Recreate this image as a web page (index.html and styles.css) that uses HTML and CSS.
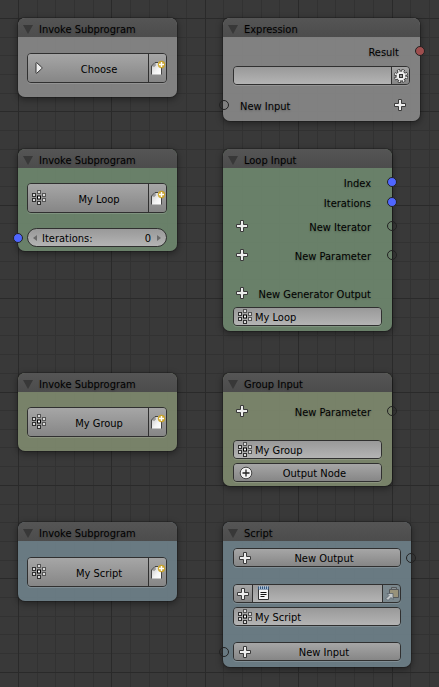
FILE: index.html
```html
<!DOCTYPE html>
<html lang="en">
<head>
<meta charset="utf-8">
<meta name="viewport" content="width=device-width, initial-scale=1">
<title>Node Editor</title>
<link rel="stylesheet" href="styles.css">
</head>
<body>
<svg class="defs" aria-hidden="true">
  <defs>
    <linearGradient id="paper" x1="0" y1="0" x2="1" y2="1">
      <stop offset="0" stop-color="#c4c4c4"/><stop offset="0.6" stop-color="#f4f4f4"/><stop offset="1" stop-color="#ffffff"/>
    </linearGradient>
    <symbol id="i-tree" viewBox="0 0 14 16">
      <g fill="#d9d9d9" stroke="#303030" stroke-width="1">
        <rect x="0.5" y="3.5" width="3" height="3"/>
        <rect x="0.5" y="8.5" width="3" height="3"/>
        <rect x="5.5" y="0.5" width="3" height="3" stroke="#555"/>
        <rect x="5.5" y="11.5" width="3" height="3"/>
        <rect x="10.5" y="3.5" width="3" height="3" stroke="#555"/>
        <rect x="10.5" y="8.5" width="3" height="3" stroke="#555"/>
        <rect x="5.5" y="6" width="3" height="3" fill="#fff" stroke="#000"/>
      </g>
    </symbol>
    <symbol id="i-plus" viewBox="0 0 12 12">
      <path d="M4.5 .5h3v4h4v3h-4v4h-3v-4h-4v-3h4z" fill="#ededed" stroke="#3a3a3a"/>
    </symbol>
    <symbol id="i-new" viewBox="0 0 16 16">
      <path d="M1.500 14.500V6l3.500-3.500H11v12z" fill="url(#paper)"/>
      <path d="M1.500 14.500V6l3.500-3.500H8M11.500 8v6.500" fill="none" stroke="#444"/>
      <path d="M2.500 6h2.500V3.500z" fill="#fff" stroke="#555" stroke-width=".7"/>
      <circle cx="11.500" cy="4.500" r="3.700" fill="#cda21a" opacity=".85"/>
      <path d="M11.500 2v5M9 4.500h5" stroke="#fff" stroke-width="1.400"/>
    </symbol>
    <symbol id="i-gear" viewBox="0 0 14 14">
      <circle cx="7" cy="7" r="5" fill="#eee" stroke="#333"/>
      <circle cx="7" cy="7" r="5.800" fill="none" stroke="#333" stroke-width="2.400" stroke-dasharray="2.900 1.655"/>
      <circle cx="7" cy="7" r="5.400" fill="none" stroke="#eee" stroke-width="2" stroke-dasharray="1.500 2.741" stroke-dashoffset="-.6"/>
      <circle cx="7" cy="7" r="4.200" fill="#eee"/>
      <rect x="5.500" y="5.500" width="3" height="3" fill="#999" stroke="#333"/>
    </symbol>
    <symbol id="i-add" viewBox="0 0 14 14">
      <circle cx="7" cy="7" r="5.800" fill="#f2f2f2" stroke="#444"/>
      <path d="M7 3.500v7M3.500 7h7" stroke="#222" stroke-width="1.300"/>
    </symbol>
    <symbol id="i-text" viewBox="0 0 14 14">
      <path d="M1.500 2.500h10v11h-10z" fill="#f4f4f4" stroke="#333"/>
      <path d="M1 2h11" stroke="#34567c" stroke-width="3"/>
      <path d="M2.500 0v3M4.500 0v3M6.500 0v3M8.500 0v3M10.500 0v3" stroke="#bcd2ea" stroke-width=".8"/>
      <path d="M3.500 6.500h6M3.500 8.500h6M3.500 10.500h4" stroke="#111"/>
    </symbol>
    <symbol id="i-paste" viewBox="0 0 16 16">
      <path d="M5.500 3.500h9v8h-9z" fill="#98927a" stroke="#55585a"/>
      <path d="M7.500 3.500v-2h5v2z" fill="#8b9296" stroke="#55585a"/>
      <path d="M3 7.500h6v6l-2-2-3 3-2-2 3-3z" fill="#c3c8ca" stroke="#55606a" stroke-width=".8"/>
    </symbol>
    <symbol id="i-play" viewBox="0 0 8 12">
      <path d="M1 1.200c0-.7.500-.8 1-.3l4.700 4.300c.5.500.5 1 0 1.500l-4.700 4.300c-.5.500-1 .4-1-.3z" fill="#eee" stroke="#333"/>
    </symbol>
    <pattern id="grid" x="18" y="18" width="467" height="467" patternUnits="userSpaceOnUse">
      <path class="line" d="M19 0v467M37 0v467M56 0v467M75 0v467M112 0v467M131 0v467M149 0v467M168 0v467M205 0v467M224 0v467M243 0v467M261 0v467M299 0v467M317 0v467M336 0v467M355 0v467M392 0v467M411 0v467M429 0v467M448 0v467" transform="translate(.5 0)"/>
      <path class="line" d="M0 19h467M0 37h467M0 56h467M0 75h467M0 112h467M0 131h467M0 149h467M0 168h467M0 205h467M0 224h467M0 243h467M0 261h467M0 299h467M0 317h467M0 336h467M0 355h467M0 392h467M0 411h467M0 429h467M0 448h467" transform="translate(0 .5)"/>
      <path class="line major" d="M0 0v467M93 0v467M187 0v467M280 0v467M374 0v467" transform="translate(.5 0)"/>
      <path class="line major" d="M0 0h467M0 93h467M0 187h467M0 280h467M0 374h467" transform="translate(0 .5)"/>
    </pattern>
  </defs>
</svg>

<main class="canvas">
  <svg class="grid" aria-hidden="true"><rect width="100%" height="100%" fill="url(#grid)"/></svg>

  <section class="node invoke plain at-invoke">
    <h2 class="head">Invoke Subprogram</h2>
    <div class="body">
      <div class="group tall">
        <button class="btn main"><svg class="lead play"><use href="#i-play"/></svg><span>Choose</span></button>
        <button class="btn square" aria-label="New subprogram"><svg class="ic16"><use href="#i-new"/></svg></button>
      </div>
    </div>
  </section>

  <section class="node expression plain at-expression">
    <h2 class="head">Expression</h2>
    <div class="body">
      <div class="row out"><span>Result</span><i class="socket right red"></i></div>
      <div class="group">
        <input class="field" type="text" aria-label="Expression">
        <button class="btn square" aria-label="Settings"><svg class="ic14"><use href="#i-gear"/></svg></button>
      </div>
      <div class="row in"><i class="socket left"></i><span>New Input</span><button class="bare" aria-label="Add input"><svg class="ic12"><use href="#i-plus"/></svg></button></div>
    </div>
  </section>

  <section class="node invoke loop at-invoke-loop">
    <h2 class="head">Invoke Subprogram</h2>
    <div class="body">
      <div class="group tall">
        <button class="btn main"><svg class="lead tree"><use href="#i-tree"/></svg><span>My Loop</span></button>
        <button class="btn square" aria-label="New subprogram"><svg class="ic16"><use href="#i-new"/></svg></button>
      </div>
      <div class="line-row">
        <i class="socket left blue"></i>
        <div class="number"><span class="arrow prev"></span><label for="iterations">Iterations:</label><input id="iterations" type="text" value="0"><span class="arrow next"></span></div>
      </div>
    </div>
  </section>

  <section class="node loop-input loop at-loop">
    <h2 class="head">Loop Input</h2>
    <div class="body">
      <div class="row out"><span>Index</span><i class="socket right blue"></i></div>
      <div class="row out"><span>Iterations</span><i class="socket right blue"></i></div>
      <div class="row out iterator"><button class="bare" aria-label="Add iterator"><svg class="ic12"><use href="#i-plus"/></svg></button><span>New Iterator</span><i class="socket right"></i></div>
      <div class="row out parameter"><button class="bare" aria-label="Add parameter"><svg class="ic12"><use href="#i-plus"/></svg></button><span>New Parameter</span><i class="socket right"></i></div>
      <div class="row out generator"><button class="bare" aria-label="Add generator output"><svg class="ic12"><use href="#i-plus"/></svg></button><span>New Generator Output</span></div>
      <div class="group name"><svg class="inset tree"><use href="#i-tree"/></svg><input class="field" type="text" aria-label="Loop name" value="My Loop"></div>
    </div>
  </section>

  <section class="node invoke subgroup at-invoke-group">
    <h2 class="head">Invoke Subprogram</h2>
    <div class="body">
      <div class="group tall">
        <button class="btn main"><svg class="lead tree"><use href="#i-tree"/></svg><span>My Group</span></button>
        <button class="btn square" aria-label="New subprogram"><svg class="ic16"><use href="#i-new"/></svg></button>
      </div>
    </div>
  </section>

  <section class="node group-input subgroup at-group">
    <h2 class="head">Group Input</h2>
    <div class="body">
      <div class="row out"><button class="bare" aria-label="Add parameter"><svg class="ic12"><use href="#i-plus"/></svg></button><span>New Parameter</span><i class="socket right"></i></div>
      <div class="group name"><svg class="inset tree"><use href="#i-tree"/></svg><input class="field" type="text" aria-label="Group name" value="My Group"></div>
      <div class="group"><button class="btn main"><svg class="lead ic14"><use href="#i-add"/></svg><span>Output Node</span></button></div>
    </div>
  </section>

  <section class="node invoke script at-invoke-script">
    <h2 class="head">Invoke Subprogram</h2>
    <div class="body">
      <div class="group tall">
        <button class="btn main"><svg class="lead tree"><use href="#i-tree"/></svg><span>My Script</span></button>
        <button class="btn square" aria-label="New subprogram"><svg class="ic16"><use href="#i-new"/></svg></button>
      </div>
    </div>
  </section>

  <section class="node script-node script at-script">
    <h2 class="head">Script</h2>
    <div class="body">
      <div class="line-row"><div class="group"><button class="btn main"><svg class="lead ic12"><use href="#i-plus"/></svg><span>New Output</span></button></div><i class="socket right"></i></div>
      <div class="group source">
        <button class="btn square" aria-label="New text"><svg class="ic12"><use href="#i-plus"/></svg></button>
        <div class="slot"><svg class="inset ic14"><use href="#i-text"/></svg><input class="field" type="text" aria-label="Text block"></div>
        <button class="btn square faded" aria-label="Paste" disabled><svg class="ic16"><use href="#i-paste"/></svg></button>
      </div>
      <div class="group name"><svg class="inset tree"><use href="#i-tree"/></svg><input class="field" type="text" aria-label="Script name" value="My Script"></div>
      <div class="line-row input-row"><i class="socket left"></i><div class="group"><button class="btn main"><svg class="lead ic12"><use href="#i-plus"/></svg><span>New Input</span></button></div></div>
    </div>
  </section>
</main>
</body>
</html>
```
FILE: styles.css
```css
* { box-sizing: border-box; }

body {
  margin: 0;
  background: #393939;
  color: #000;
  font: 11px/16px "DejaVu Sans Condensed", "DejaVu Sans", sans-serif;
}

button, input {
  margin: 0;
  padding: 0;
  border: 0;
  border-radius: 0;
  background: none;
  color: inherit;
  font: inherit;
  min-width: 0;
}

svg { display: block; flex: none; }
.defs { position: absolute; width: 0; height: 0; }

.canvas { position: relative; min-height: 100vh; overflow: hidden; }
.grid { position: absolute; inset: 0; width: 100%; height: 100%; }
.line { fill: none; stroke: #323232; stroke-width: 1; }
.line.major { stroke: #2a2a2a; }

/* Nodes */
.node {
  position: absolute;
  border-radius: 7px;
  background: var(--tint);
  box-shadow: 0 0 0 1px rgba(0, 0, 0, .2), 0 2px 6px 1px rgba(0, 0, 0, .35);
  text-shadow: 0 1px 2px rgba(0, 0, 0, .25);
  white-space: nowrap;
}
.plain { --tint: rgba(131, 131, 131, .97); }
.loop { --tint: rgba(106, 130, 106, .97); }
.subgroup { --tint: rgba(122, 132, 106, .97); }
.script { --tint: rgba(106, 124, 132, .97); }

.at-invoke { left: 18px; top: 18px; }
.at-expression { left: 223px; top: 18px; width: 197px; }
.at-invoke-loop { left: 18px; top: 149px; }
.at-loop { left: 223px; top: 149px; width: 169px; }
.at-invoke-group { left: 18px; top: 373px; }
.at-group { left: 223px; top: 373px; width: 169px; }
.at-invoke-script { left: 18px; top: 522px; }
.at-script { left: 223px; top: 522px; width: 188px; }
.invoke { width: 159px; }

.head {
  display: flex;
  align-items: center;
  gap: 6px;
  height: 19px;
  margin: 0;
  padding: 4px 5px 0;
  border-radius: 7px 7px 0 0;
  background: linear-gradient(#555, #4c4c4c);
  font-size: 11px;
  font-weight: 400;
}
.head::before {
  content: "";
  border: 5px solid transparent;
  border-top: 9px solid #383838;
  border-bottom: 0;
}

.body { display: flex; flex-direction: column; padding: 4px 10px; }
.invoke .body { padding: 15px 10px 14px 9px; }
.invoke.plain .body, .invoke.script .body { padding-top: 16px; }
.invoke.loop .body { gap: 15px; padding-bottom: 4px; }
.expression .body { padding-bottom: 6px; }
.expression .group { margin: 5px 0 10px; }
.loop-input .body { padding-bottom: 5px; }
.iterator, .loop-input .name { margin-top: 4px; }
.parameter { margin-top: 9px; }
.generator { margin-top: 18px; }
.group-input .body { gap: 4px; padding-top: 9px; }
.group-input .name { margin-top: 15px; }
.script-node .body { gap: 4px; padding: 7px 10px 6px; }
.source { margin-top: 13px; }
.input-row { margin-top: 12px; }

/* Rows and sockets */
.row, .line-row { position: relative; }
.row { display: flex; align-items: center; height: 20px; }
.row span, .tall span { padding-top: 3px; }
.out { padding: 0 11px 0 3px; }
.out span { margin-left: auto; }
.in { padding: 0 4px 0 7px; justify-content: space-between; }

.socket {
  position: absolute;
  top: 50%;
  width: 10px;
  height: 10px;
  margin-top: -5px;
  border: 1px solid #222;
  border-radius: 50%;
}
.socket.right { right: -15px; }
.socket.left { left: -14px; }
.red { background: #9e4e4e; }
.blue { background: #4f66ff; }

.bare { width: 12px; height: 12px; }

/* Controls */
.group {
  position: relative;
  display: flex;
  height: 19px;
  border: 1px solid #303030;
  border-radius: 4px;
  box-shadow: 0 1px 0 rgba(255, 255, 255, .15);
  overflow: hidden;
  text-shadow: none;
}
.tall { height: 30px; }
.btn {
  position: relative;
  display: flex;
  align-items: center;
  justify-content: center;
  background: linear-gradient(#a6a6a6, #868686);
}
.btn span { padding-top: 2px; }
.tall .btn span { padding-top: 3px; }
.main { flex: 1; padding-left: 14px; }
.tall .main { padding-left: 22px; }
.lead { position: absolute; left: 5px; }
.lead.tree { left: 4px; }
.lead.play { left: 7px; }
.square { width: 18px; }
.btn + .btn, .field + .btn, .slot + .btn { border-left: 1px solid #303030; }
.faded { background: rgba(140, 148, 152, .5); }

.field {
  flex: 1;
  width: 100%;
  padding-top: 2px;
  background: linear-gradient(#999, #b4b4b4);
}
.inset { position: absolute; top: 1px; left: 4px; z-index: 1; }
.inset + .field { padding-left: 21px; }
.slot { position: relative; display: flex; flex: 1; border-left: 1px solid #303030; }

.number {
  display: flex;
  align-items: center;
  height: 19px;
  padding: 0 5px;
  border: 1px solid #303030;
  border-radius: 10px;
  background: linear-gradient(#999, #b4b4b4);
  text-shadow: none;
}
.number label, .number input { padding-top: 2px; }
.number input { flex: 1; width: 0; text-align: right; }
.arrow { border: 3px solid transparent; }
.prev { margin-right: 5px; border-left: 0; border-right: 4px solid #6a6a6a; }
.next { margin-left: 6px; border-right: 0; border-left: 4px solid #6a6a6a; }

.tree { width: 14px; height: 16px; }
.play { width: 8px; height: 12px; }
.ic12 { width: 12px; height: 12px; }
.ic14 { width: 14px; height: 14px; }
.ic16 { width: 16px; height: 16px; }
```
